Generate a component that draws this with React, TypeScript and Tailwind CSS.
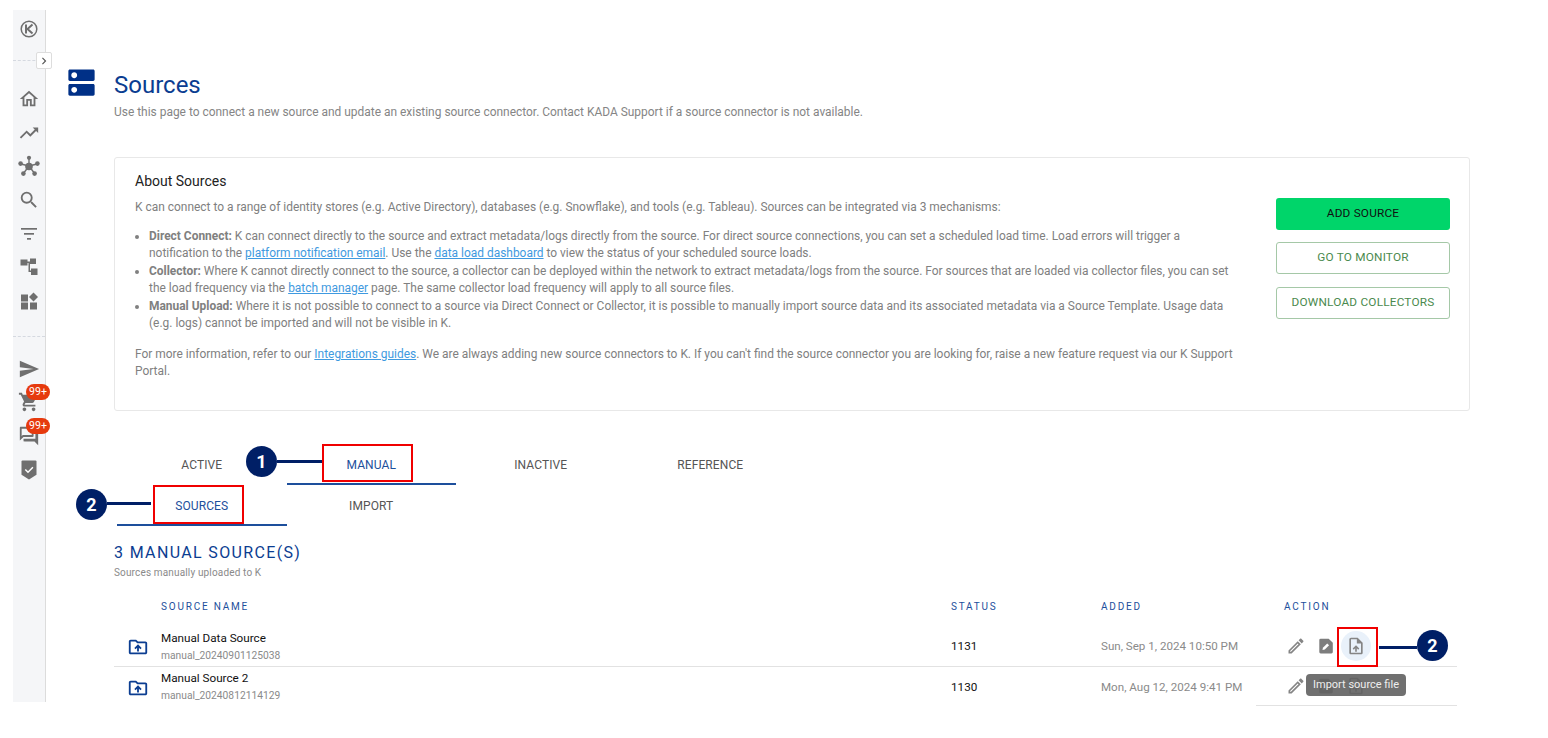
import React from "react";
import {
  MdOutlineHome, MdTrendingUp, MdSearch, MdSend, MdShoppingCart, MdOutlineForum, MdDns,
  MdOutlineDriveFolderUpload, MdOutlineUploadFile, MdChevronRight, MdOutlineEdit,
} from "react-icons/md";

const GREY = "#6f6f6f";

function Network() {
  return (
    <svg width="22" height="22" viewBox="0 0 22 22" fill={GREY}>
      <path d="M11 3 11 11M3 9l8 2 8-2M5 19l6-8 6 8" stroke={GREY} strokeWidth="1.4" fill="none" />
      <circle cx="11" cy="11.5" r="3.8" /><circle cx="11" cy="2.8" r="2.1" /><circle cx="2.6" cy="8.6" r="2.3" />
      <circle cx="19.4" cy="8.6" r="2.3" /><circle cx="5.4" cy="18.6" r="2.3" /><circle cx="16.6" cy="18.6" r="2.3" />
    </svg>
  );
}
function Filter() {
  return (
    <svg width="20" height="20" viewBox="0 0 20 20" fill={GREY}>
      <rect x="2" y="4" width="16" height="1.7" /><rect x="5" y="9" width="10" height="1.7" /><rect x="8" y="14" width="4" height="1.7" />
    </svg>
  );
}
function Tree() {
  return (
    <svg width="20" height="20" viewBox="0 0 20 20" fill={GREY}>
      <rect x="1.5" y="2.5" width="7" height="6" /><rect x="11" y="1.5" width="6" height="5.500" /><rect x="12" y="11.500" width="6.500" height="6.500" />
      <path d="M8 4.500h4v1.500H8zM9.500 5h1.500v9H9.500zM9.500 13.500h3V15h-3z" />
    </svg>
  );
}
function Widgets() {
  return (
    <svg width="20" height="20" viewBox="0 0 20 20" fill={GREY}>
      <rect x="2" y="3.500" width="7" height="7" /><rect x="2" y="11.500" width="7" height="7" /><rect x="11" y="11.500" width="7" height="7" />
      <path d="M14.500 1.500l4.500 4.500-4.500 4.500L10 6z" />
    </svg>
  );
}
function Shield() {
  return (
    <svg width="20" height="22" viewBox="0 0 20 22">
      <path d="M3.500 1.500h13a1 1 0 0 1 1 1v13.200L10 20.500l-7.500-4.800V2.500a1 1 0 0 1 1-1z" fill={GREY} />
      <path d="M6.300 10.500l2.700 2.700 4.900-4.900" stroke="#fff" strokeWidth="1.500" fill="none" />
    </svg>
  );
}
function KLogo() {
  return (
    <svg width="18" height="18" viewBox="0 0 18 18" fill="none" stroke="#6f6f6f" strokeWidth="1.500">
      <circle cx="9" cy="9" r="7.800" />
      <path d="M6 4.500v9M12.500 4.500 7.500 9l5 4.500" strokeWidth="2" />
    </svg>
  );
}
function DocEdit() {
  return (
    <svg width="20" height="20" viewBox="0 0 20 20">
      <path d="M4.700 2.700h8L16.800 6.800v9.300a1.400 1.400 0 0 1-1.400 1.400H4.700a1.400 1.400 0 0 1-1.400-1.400V4.100a1.400 1.400 0 0 1 1.400-1.400z" fill="#7d7d7d" />
      <path d="M6.500 14l.4-2.300 4.300-4.300 1.900 1.900-4.300 4.300z" fill="#fff" />
    </svg>
  );
}
function Badge() {
  return (
    <span className="absolute left-[8px] top-[-7px] flex h-[16px] w-[24px] items-center justify-center rounded-full bg-[#e63a0e] text-[10.5px] leading-none text-white">99+</span>
  );
}
function Slot({ children }: { children: React.ReactNode }) {
  return <div className="flex h-[33.7px] w-full items-center justify-center">{children}</div>;
}
function Callout({ n, className }: { n: number; className: string }) {
  return (
    <div className={"absolute flex h-[31px] w-[31px] items-center justify-center rounded-full bg-[#001f66] text-[18px] font-bold text-white " + className}>{n}</div>
  );
}
function Tab({ label, active }: { label: string; active?: boolean }) {
  return (
    <div className={"flex h-[41px] w-[169.5px] items-center justify-center border-y-2 border-t-transparent text-[12px] tracking-[0.1px] " + (active ? "border-b-[#1d4f9c] text-[#1d4f9c]" : "border-b-transparent text-[#555]")}>
      {label}
    </div>
  );
}
function Row({ name, id, status, date, last }: { name: string; id: string; status: string; date: string; last?: boolean }) {
  return (
    <div className={last ? "flex h-[39px] items-center" : "flex h-[41px] items-center border-b border-[#e2e2e2]"}>
      <div className="flex w-[47px] justify-center pt-[2px]">
        <MdOutlineDriveFolderUpload size={22} color="#0b3d91" />
      </div>
      <div className="w-[790px]">
        <div className="text-[11.7px] leading-[16px] text-[#111]">{name}</div>
        <div className="mt-[2px] text-[10.25px] leading-[15px] text-[#8a8a8a]">{id}</div>
      </div>
      <div className="w-[150px] pt-[2px] text-[11.7px] text-[#111]">{status}</div>
      <div className="w-[155px] pt-[2px] text-[11.6px] text-[#8a8a8a]">{date}</div>
      <div className={"flex w-[201px] items-center gap-[10px] pl-[30px] " + (last ? "h-full border-b border-[#e2e2e2]" : "")}>
        <MdOutlineEdit size={20} color="#858585" />
        <DocEdit />
        <div className={"-m-[5px] flex h-[30px] w-[30px] items-center justify-center rounded-full " + (last ? "" : "bg-[#e9f1fa]")}>
          <MdOutlineUploadFile size={20} color="#858585" />
        </div>
      </div>
    </div>
  );
}

export default function App() {
  return (
    <div className="relative flex h-[738px] w-[1548px] overflow-hidden bg-white font-['Roboto',sans-serif]">
      <aside className="relative ml-[13px] mt-[10px] flex h-[692px] w-[33px] shrink-0 flex-col items-center border-r border-[#dcdcdc] bg-[#f5f6f8] pt-[10px]">
        <KLogo />
        <div className="mt-[22px] w-full border-t border-dashed border-[#d5d9e0]" />
        <div className="absolute left-[23px] top-[42px] flex h-[17px] w-[16px] items-center justify-center rounded-[2px] border border-[#ddd] bg-white">
          <MdChevronRight size={16} color="#555" />
        </div>
        <div className="mt-[21px] flex w-full flex-col">
          <Slot><MdOutlineHome size={22} color={GREY} /></Slot>
          <Slot><MdTrendingUp size={22} color={GREY} /></Slot>
          <Slot><Network /></Slot>
          <Slot><MdSearch size={22} color={GREY} /></Slot>
          <Slot><Filter /></Slot>
          <Slot><Tree /></Slot>
          <Slot><Widgets /></Slot>
        </div>
        <div className="mt-[18px] w-full border-t border-dashed border-[#d5d9e0]" />
        <div className="mt-[15px] flex w-full flex-col">
          <Slot><MdSend size={22} color={GREY} /></Slot>
          <Slot><div className="relative"><MdShoppingCart size={22} color={GREY} /><Badge /></div></Slot>
          <Slot><div className="relative"><MdOutlineForum size={22} color={GREY} /><Badge /></div></Slot>
          <Slot><Shield /></Slot>
        </div>
      </aside>

      <main className="ml-[22px] flex-1 pt-[66px]">
        <div className="flex">
          <MdDns size={35} color="#003087" className="ml-[-4px] mt-[-1px]" />
          <div className="ml-[15px]">
            <h1 className="text-[24px] leading-[38px] text-[#0b3d91]">Sources</h1>
            <p className="text-[11.95px] leading-[16px] text-[#858585]">Use this page to connect a new source and update an existing source connector. Contact KADA Support if a source connector is not available.</p>
          </div>
        </div>

        <section className="ml-[46px] mt-[37px] flex h-[254px] w-[1356px] rounded-[3px] border border-[#e8e8e8] pl-[20px] pt-[14px]">
          <div className="w-[1105px] pr-[5px] text-[11.95px] leading-[17.5px] text-[#808080]">
            <h2 className="text-[14px] leading-[18px] text-[#222]">About Sources</h2>
            <p className="mt-[9px]">K can connect to a range of identity stores (e.g. Active Directory), databases (e.g. Snowflake), and tools (e.g. Tableau). Sources can be integrated via 3 mechanisms:</p>
            <ul className="mt-[11px] list-disc pl-[14px]">
              <li><b className="font-bold">Direct Connect:</b> K can connect directly to the source and extract metadata/logs directly from the source. For direct source connections, you can set a scheduled load time. Load errors will trigger a notification to the <a className="text-[#3f9ae0] underline">platform notification email</a>. Use the <a className="text-[#3f9ae0] underline">data load dashboard</a> to view the status of your scheduled source loads.</li>
              <li><b className="font-bold">Collector:</b> Where K cannot directly connect to the source, a collector can be deployed within the network to extract metadata/logs from the source. For sources that are loaded via collector files, you can set the load frequency via the <a className="text-[#3f9ae0] underline">batch manager</a> page. The same collector load frequency will apply to all source files.</li>
              <li><b className="font-bold">Manual Upload:</b> Where it is not possible to connect to a source via Direct Connect or Collector, it is possible to manually import source data and its associated metadata via a Source Template. Usage data (e.g. logs) cannot be imported and will not be visible in K.</li>
            </ul>
            <p className="mt-[13px]">For more information, refer to our <a className="text-[#3f9ae0] underline">Integrations guides</a>. We are always adding new source connectors to K. If you can't find the source connector you are looking for, raise a new feature request via our K Support Portal.</p>
          </div>
          <div className="ml-[36px] mt-[26px] flex w-[174px] flex-col gap-[12px] text-[11.8px] tracking-[0.2px]">
            <div className="flex h-[32px] items-center justify-center rounded-[3px] bg-[#00d56a] text-[#111]">ADD SOURCE</div>
            <div className="flex h-[32px] items-center justify-center rounded-[3px] border border-[#a5c8a7] text-[#4a8a4e]">GO TO MONITOR</div>
            <div className="mt-[1px] flex h-[32px] items-center justify-center rounded-[3px] border border-[#a5c8a7] text-[#4a8a4e]">DOWNLOAD COLLECTORS</div>
          </div>
        </section>

        <div className="ml-[49px] mt-[33px] flex">
          <Tab label="ACTIVE" /><Tab label="MANUAL" active /><Tab label="INACTIVE" /><Tab label="REFERENCE" />
        </div>
        <div className="ml-[49px] flex">
          <Tab label="SOURCES" active /><Tab label="IMPORT" />
        </div>

        <h3 className="ml-[46px] mt-[17px] text-[16px] leading-[20px] tracking-[1.35px] text-[#0b3d91]">3 MANUAL SOURCE(S)</h3>
        <p className="ml-[46px] mt-[3px] text-[10px] leading-[14px] tracking-[0.15px] text-[#8a8a8a]">Sources manually uploaded to K</p>

        <div className="ml-[46px] mt-[16px] w-[1343px]">
          <div className="mb-[10px] flex h-[20px] items-center text-[10px] tracking-[1.8px] text-[#1d4f9c]">
            <div className="ml-[47px] w-[790px]">SOURCE NAME</div>
            <div className="w-[150px]">STATUS</div>
            <div className="w-[183px]">ADDED</div>
            <div>ACTION</div>
          </div>
          <Row name="Manual Data Source" id="manual_20240901125038" status="1131" date="Sun, Sep 1, 2024 10:50 PM" />
          <Row name="Manual Source 2" id="manual_20240812114129" status="1130" date="Mon, Aug 12, 2024 9:41 PM" last />
        </div>
      </main>

      {/* annotations */}
      <Callout n={1} className="left-[246px] top-[446px]" />
      <div className="absolute left-[277px] top-[460px] h-[3px] w-[45px] bg-[#001f66]" />
      <div className="absolute left-[322px] top-[444px] h-[38px] w-[91px] border-2 border-[#f00000]" />
      <Callout n={2} className="left-[76px] top-[489px]" />
      <div className="absolute left-[107px] top-[502px] h-[3px] w-[44px] bg-[#001f66]" />
      <div className="absolute left-[153px] top-[485px] h-[39px] w-[91px] border-2 border-[#f00000]" />
      <Callout n={2} className="left-[1417px] top-[630px]" />
      <div className="absolute left-[1379px] top-[646px] h-[3px] w-[38px] bg-[#001f66]" />
      <div className="absolute left-[1337px] top-[627px] h-[40px] w-[41px] border-2 border-[#f00000]" />
      <div className="absolute left-[1306px] top-[674px] flex h-[22px] w-[100px] items-center justify-center rounded-[4px] bg-[#616161]/90 text-[11px] text-[#eee]">Import source file</div>
    </div>
  );
}
